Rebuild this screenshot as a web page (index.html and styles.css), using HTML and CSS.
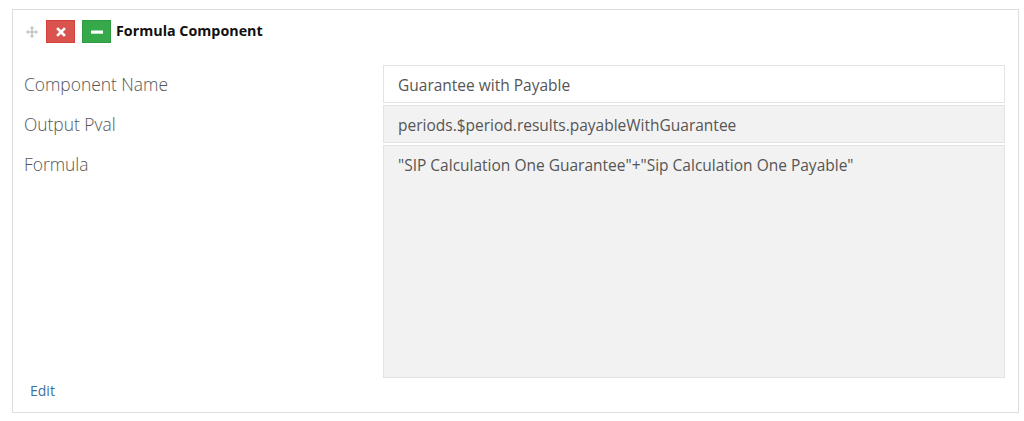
FILE: index.html
```html
<!DOCTYPE html>
<html>
<head>
<meta charset="utf-8">
<link rel="stylesheet" href="styles.css">
</head>
<body>
<div class="card">
  <div class="header">
    <svg class="move" width="12" height="12" viewBox="0 0 12 12">
      <path d="M6 0 L8.5 2.5 H6.8 V5.2 H9.5 V3.5 L12 6 L9.5 8.5 V6.8 H6.8 V9.5 H8.5 L6 12 L3.5 9.5 H5.2 V6.8 H2.5 V8.5 L0 6 L2.5 3.5 V5.2 H5.2 V2.5 H3.5 Z" fill="#c4c4c4"/>
    </svg>
    <span class="btn btn-red">
      <svg width="10" height="10" viewBox="0 0 10 10"><path d="M2 2 L8 8 M8 2 L2 8" stroke="#fff" stroke-width="2.6" stroke-linecap="square"/></svg>
    </span>
    <span class="btn btn-green">
      <svg width="12" height="10" viewBox="0 0 12 10"><rect x="0" y="3.5" width="12" height="3.2" fill="#fff"/></svg>
    </span>
    <span class="title">Formula Component</span>
  </div>
  <div class="rows">
    <div class="row">
      <div class="label">Component Name</div>
      <div class="field field-white">Guarantee with Payable</div>
    </div>
    <div class="row">
      <div class="label">Output Pval</div>
      <div class="field">periods.$period.results.payableWithGuarantee</div>
    </div>
    <div class="row">
      <div class="label">Formula</div>
      <div class="field field-tall">"SIP Calculation One Guarantee"+"Sip Calculation One Payable"</div>
    </div>
  </div>
  <a class="edit" href="#">Edit</a>
</div>
</body>
</html>
```
FILE: styles.css
```css
body {
  margin: 0;
  background: #fff;
  font-family: "Open Sans", "Liberation Sans", sans-serif;
}
.card {
  margin: 9px 0 0 12px;
  width: 1007px;
  height: 404px;
  border: 1px solid #dddddd;
  box-sizing: border-box;
  display: flex;
  flex-direction: column;
}
.header {
  display: flex;
  align-items: center;
  height: 23px;
  margin-top: 10px;
  padding-left: 13px;
}
.move {
  margin-right: 8px;
}
.btn {
  width: 29px;
  height: 23px;
  display: flex;
  align-items: center;
  justify-content: center;
  box-sizing: border-box;
}
.btn-red {
  background: #d9534f;
  border: 1px solid #d43f3a;
}
.btn-green {
  background: #36a94a;
  border: 1px solid #2f9a41;
  margin-left: 7px;
}
.title {
  font-weight: 700;
  font-size: 14.3px;
  color: #111;
  margin-left: 5px;
  margin-top: -2px;
}
.rows {
  display: flex;
  flex-direction: column;
  gap: 2px;
  margin-top: 22px;
  padding: 0 13px 0 11px;
}
.row {
  display: flex;
}
.label {
  width: 359px;
  font-size: 17.4px;
  font-weight: 300;
  color: #555;
  padding-top: 8px;
  line-height: 22px;
}
.field {
  flex: 1;
  background: #f2f2f2;
  border: 1px solid #e3e3e3;
  padding: 8px 14px;
  height: 38px;
  box-sizing: border-box;
  font-size: 15.5px;
  line-height: 22px;
  color: #555;
}
.field-white {
  background: #fff;
}
.field-tall {
  height: 233px;
}
.edit {
  margin: 3px 0 0 17px;
  font-size: 14px;
  color: #3d6f9e;
  text-decoration: none;
  line-height: 20px;
}
```
